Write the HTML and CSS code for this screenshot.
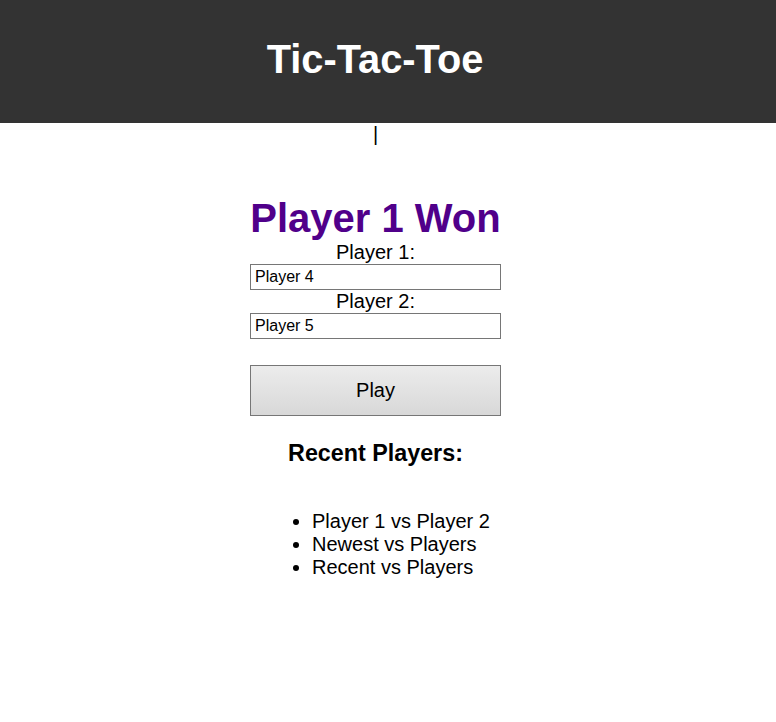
FILE: index.html
```html
<!DOCTYPE html>
<html>
<head>
<meta charset="utf-8">
<link rel="stylesheet" href="styles.css">
</head>
<body>
<header class="top">
  <h1 class="title">Tic-Tac-Toe</h1>
</header>
<div class="content">
  <div class="cursor">|</div>
  <main class="panel">
    <h2 class="status">Player 1 Won</h2>
    <label class="label" for="p1">Player 1:</label>
    <input class="field" id="p1" type="text" value="Player 4">
    <label class="label" for="p2">Player 2:</label>
    <input class="field" id="p2" type="text" value="Player 5">
    <button class="play">Play</button>
    <h3 class="recent">Recent Players:</h3>
    <ul class="list">
      <li>Player 1 vs Player 2</li>
      <li>Newest vs Players</li>
      <li>Recent vs Players</li>
    </ul>
  </main>
</div>
</body>
</html>
```
FILE: styles.css
```css
html, body {
  margin: 0;
  padding: 0;
  background: #fff;
  font-family: "Liberation Sans", Arial, sans-serif;
  color: #000;
}
.top {
  background: #333333;
  height: 123px;
  padding-right: 26px;
  display: flex;
  align-items: center;
  justify-content: center;
}
.title {
  margin: 0;
  color: #fff;
  font-size: 39.8px;
  font-weight: bold;
  line-height: 1;
  position: relative;
  top: -2px;
}
.content {
  padding-right: 25px;
}
.cursor {
  text-align: center;
  font-size: 20px;
  line-height: 23px;
  height: 23px;
  color: #000;
}
.panel {
  width: 251px;
  margin: 0 auto;
  display: flex;
  flex-direction: column;
  align-items: stretch;
}
.status {
  margin: 49px 0 0 0;
  color: #50008a;
  font-size: 40px;
  font-weight: bold;
  text-align: center;
  line-height: 46px;
  white-space: nowrap;
}
.label {
  text-align: center;
  font-size: 20px;
  line-height: 23px;
}
.field {
  box-sizing: border-box;
  width: 251px;
  height: 26px;
  margin: 0;
  border: 1px solid #767676;
  padding: 0 4px;
  font-family: "Liberation Sans", Arial, sans-serif;
  font-size: 16px;
  color: #000;
  background: #fff;
  border-radius: 0;
  outline: none;
}
.play {
  box-sizing: border-box;
  width: 251px;
  height: 51px;
  margin-top: 26px;
  border: 1px solid #767676;
  border-radius: 0;
  background: linear-gradient(#ececec, #d8d8d8);
  font-family: "Liberation Sans", Arial, sans-serif;
  font-size: 20px;
  color: #000;
}
.recent {
  margin: 24px 0 0 0;
  text-align: center;
  font-size: 23.3px;
  font-weight: bold;
  line-height: 26px;
}
.list {
  margin: 44px 0 0 0;
  padding: 0 0 0 62px;
  font-size: 20px;
  line-height: 23px;
}
```
